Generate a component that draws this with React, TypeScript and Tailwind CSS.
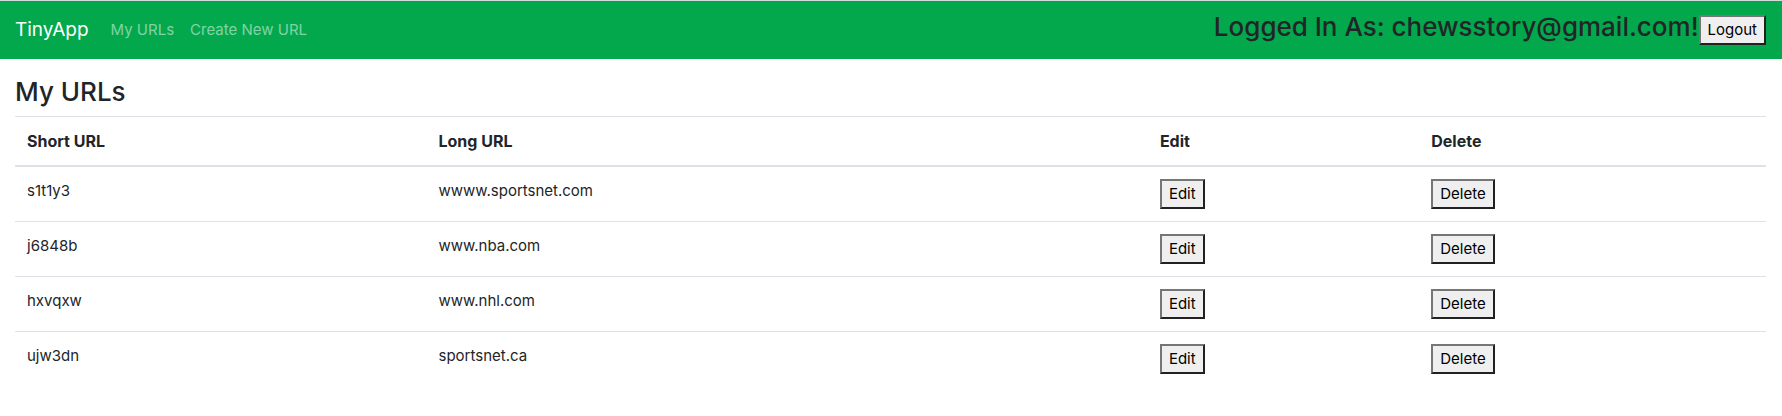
type UrlEntry = { id: string; longUrl: string };

const urls: UrlEntry[] = [
  { id: "s1t1y3", longUrl: "wwww.sportsnet.com" },
  { id: "j6848b", longUrl: "www.nba.com" },
  { id: "hxvqxw", longUrl: "www.nhl.com" },
  { id: "ujw3dn", longUrl: "sportsnet.ca" },
];

function OutsetButton({ label, describedAs }: { label: string; describedAs?: string }) {
  return (
    <button
      type="button"
      aria-label={describedAs}
      className="block h-[30px] cursor-pointer border-2 border-t-[#767676] border-r-[#212121] border-b-[#212121] border-l-[#767676] bg-[#efefef] px-[7px] text-[15px] leading-6 whitespace-nowrap text-black"
    >
      {label}
    </button>
  );
}

function NavBar() {
  return (
    <header className="flex min-h-[59px] items-center border-t border-[#d5dadc] bg-[#02a84b] px-4 pl-[15px]">
      <a href="#" className="mr-3.5 text-[19px] leading-[30px] text-white">
        TinyApp
      </a>
      <nav className="flex grow">
        <a href="#urls" className="px-2 py-2 leading-6 text-white/50">
          My URLs
        </a>
        <a href="#new" className="px-2 py-2 leading-6 text-white/50">
          Create New URL
        </a>
      </nav>
      <div className="flex items-center">
        <h3 className="mb-2 text-[26px] leading-[33px] font-medium">
          Logged In As: chewsstory@gmail.com!
        </h3>
        <OutsetButton label="Logout" />
      </div>
    </header>
  );
}

function UrlTable() {
  return (
    <table className="w-full table-fixed border-separate border-spacing-0 text-left">
      <colgroup>
        <col className="w-[23.5%]" />
        <col className="w-[41.2%]" />
        <col className="w-[15.5%]" />
        <col />
      </colgroup>
      <thead className="text-base [&_th]:border-t [&_th]:border-b-2 [&_th]:border-[#dee2e6] [&_th]:p-3 [&_th]:font-bold">
        <tr>
          <th scope="col">Short URL</th>
          <th scope="col">Long URL</th>
          <th scope="col">Edit</th>
          <th scope="col">Delete</th>
        </tr>
      </thead>
      <tbody className="[&_td]:border-b [&_td]:border-[#dee2e6] [&_td]:p-3 [&_tr:last-child_td]:border-b-0">
        {urls.map(({ id, longUrl }) => (
          <tr key={id} className="align-top">
            <td>{id}</td>
            <td>{longUrl}</td>
            <td>
              <OutsetButton label="Edit" describedAs={`Edit ${id}`} />
            </td>
            <td>
              <OutsetButton label="Delete" describedAs={`Delete ${id}`} />
            </td>
          </tr>
        ))}
      </tbody>
    </table>
  );
}

export default function App() {
  return (
    <div className="min-h-screen bg-white font-[Inter,sans-serif] text-[15px] leading-6 text-[#212529]">
      <NavBar />
      <main className="px-4 pt-4 pl-[15px]">
        <h3 className="mb-2 text-[26px] leading-[33px] font-medium">My URLs</h3>
        <UrlTable />
      </main>
    </div>
  );
}
